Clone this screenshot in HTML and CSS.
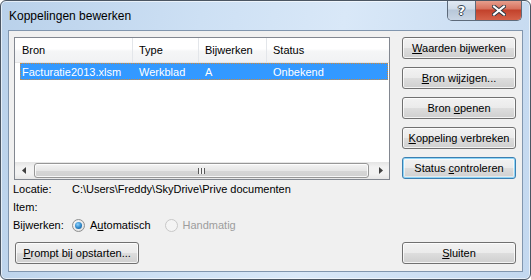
FILE: index.html
```html
<!DOCTYPE html>
<html lang="nl">
<head>
    <meta charset="UTF-8">
    <title>Koppelingen bewerken</title>
    <link rel="stylesheet" href="styles.css">
</head>
<body>
    <div class="window">
        <div class="titlebar">
            <span class="title">Koppelingen bewerken</span>
            <div class="caption-buttons">
                <span class="cap cap-help">?</span>
                <span class="cap cap-close">
                    <svg width="14" height="11" viewBox="0 0 14 11">
                        <path d="M2 1.5 L12 9.5 M12 1.5 L2 9.5" stroke="#2f3a44" stroke-width="4" stroke-linecap="square"/>
                        <path d="M2 1.5 L12 9.5 M12 1.5 L2 9.5" stroke="#fff" stroke-width="2" stroke-linecap="square"/>
                    </svg>
                </span>
            </div>
        </div>

        <div class="client">
            <div class="top">
                <div class="listview">
                    <div class="lv-header">
                        <span class="col c1">Bron</span>
                        <span class="col c2">Type</span>
                        <span class="col c3">Bijwerken</span>
                        <span class="col c4">Status</span>
                    </div>
                    <div class="lv-row selected">
                        <span class="cell c1">Facturatie2013.xlsm</span>
                        <span class="cell c2">Werkblad</span>
                        <span class="cell c3">A</span>
                        <span class="cell c4">Onbekend</span>
                    </div>
                    <div class="lv-body"></div>
                    <div class="hscroll">
                        <span class="sb-btn">
                            <svg width="4" height="7" viewBox="0 0 4 7"><path d="M4 0 L0 3.5 L4 7 Z" fill="#404040"/></svg>
                        </span>
                        <span class="sb-thumb">
                            <span class="grip"></span>
                        </span>
                        <span class="sb-btn">
                            <svg width="4" height="7" viewBox="0 0 4 7"><path d="M0 0 L4 3.5 L0 7 Z" fill="#404040"/></svg>
                        </span>
                    </div>
                </div>

                <div class="side-buttons">
                    <button class="btn"><u>W</u>aarden bijwerken</button>
                    <button class="btn"><u>B</u>ron wijzigen...</button>
                    <button class="btn">Bron <u>o</u>penen</button>
                    <button class="btn"><u>K</u>oppeling verbreken</button>
                    <button class="btn btn-default">Status <u>c</u>ontroleren</button>
                </div>
            </div>

            <div class="info">
                <div class="info-row">
                    <span class="label">Locatie:</span>
                    <span>C:\Users\Freddy\SkyDrive\Prive documenten</span>
                </div>
                <div class="info-row">
                    <span class="label">Item:</span>
                </div>
                <div class="info-row">
                    <span class="label">Bijwerken:</span>
                    <span class="radio checked"></span>
                    <span class="radio-text">A<u>u</u>tomatisch</span>
                    <span class="radio disabled"></span>
                    <span class="radio-text disabled">Handmatig</span>
                </div>
            </div>

            <div class="bottom">
                <button class="btn btn-prompt"><u>P</u>rompt bij opstarten...</button>
                <button class="btn btn-close"><u>S</u>luiten</button>
            </div>
        </div>
    </div>
</body>
</html>
```

FILE: styles.css
```css
body {
    margin: 0;
    font-family: "Liberation Sans", Arial, sans-serif;
    font-size: 11px;
    color: #000;
    background: #fff;
}
.window {
    width: 531px;
    height: 280px;
    box-sizing: border-box;
    border: 1px solid #4b5663;
    border-radius: 6px;
    background: linear-gradient(100deg, #b9d1ea 0%, #cde0f4 35%, #d9e8f8 60%, #c3d8ef 100%);
    box-shadow: inset 0 0 0 1px rgba(255, 255, 255, 0.6);
    display: flex;
    flex-direction: column;
    overflow: hidden;
}
.titlebar {
    height: 29px;
    flex: none;
    display: flex;
    justify-content: space-between;
    align-items: flex-start;
}
.title {
    font-size: 12px;
    margin: 8px 0 0 8px;
    color: #000;
}
.caption-buttons {
    display: flex;
    margin-right: 8px;
    margin-top: -1px;
    border: 1px solid #5d6a7a;
    border-top: none;
    border-radius: 0 0 5px 5px;
    overflow: hidden;
    height: 20px;
}
.cap {
    display: flex;
    align-items: center;
    justify-content: center;
    height: 20px;
}
.cap-help {
    width: 27px;
    border-right: 1px solid #5d6a7a;
    background: linear-gradient(#e3ebf4 0%, #cfdbe8 45%, #b7c7d9 50%, #c9d6e5 100%);
    font-family: "DejaVu Sans", sans-serif;
    font-weight: bold;
    font-size: 13px;
    color: #fff;
    text-shadow: 1px 0 #3a4654, -1px 0 #3a4654, 0 1px #3a4654, 0 -1px #3a4654;
}
.cap-close {
    width: 45px;
    background: linear-gradient(#e8a493 0%, #d7705c 45%, #c2412b 50%, #d5624a 100%);
}
.client {
    flex: 1;
    margin: 0 7px 7px 7px;
    border: 1px solid #8196ae;
    background: #f0f0f0;
    padding: 6px 6px 7px 5px;
    display: flex;
    flex-direction: column;
}
.top {
    display: flex;
    gap: 12px;
}
.listview {
    width: 376px;
    height: 143px;
    box-sizing: border-box;
    border: 1px solid #828790;
    background: #fff;
    display: flex;
    flex-direction: column;
}
.lv-header {
    height: 24px;
    display: flex;
    border-bottom: 1px solid #e5e5e5;
    background: linear-gradient(#ffffff 0%, #ffffff 45%, #f5f6f7 55%, #f1f2f4 100%);
    flex: none;
}
.col {
    display: flex;
    align-items: center;
    padding-left: 6px;
    box-sizing: border-box;
    border-right: 1px solid #e3e6ea;
}
.c1 { width: 118px; padding-left: 7px; }
.c2 { width: 66px; }
.c3 { width: 68px; }
.c4 { flex: 1; }
.lv-header .c4 { border-right: none; }
.lv-row {
    height: 17px;
    margin: 0 1px 0 5px;
    display: flex;
    box-sizing: border-box;
}
.lv-row.selected {
    background: #3399ff;
    color: #fff;
    border: 1px dotted #d0893a;
}
.cell {
    display: flex;
    align-items: center;
    padding-left: 6px;
    box-sizing: border-box;
}
.lv-row .c1 { width: 112px; padding-left: 1px; }
.lv-body {
    flex: 1;
}
.hscroll {
    height: 17px;
    flex: none;
    display: flex;
    background: linear-gradient(#e4e4e4, #f2f2f2 30%, #f2f2f2 70%, #e6e6e6);
}
.sb-btn {
    width: 17px;
    display: flex;
    align-items: center;
    justify-content: center;
}
.sb-thumb {
    flex: 1;
    margin: 1px 3px 1px 2px;
    border: 1px solid #979797;
    border-radius: 3px;
    background: linear-gradient(#f4f4f4 0%, #e6e6e6 50%, #d6d6d6 51%, #d0d0d0 100%);
    box-shadow: inset 0 0 0 1px rgba(255, 255, 255, 0.8);
    display: flex;
    align-items: center;
    justify-content: center;
}
.grip {
    width: 7px;
    height: 6px;
    background: repeating-linear-gradient(90deg, #5a5a5a 0 1px, #f4f4f4 1px 3px);
}
.side-buttons {
    width: 114px;
    display: flex;
    flex-direction: column;
    gap: 8px;
}
.btn {
    height: 22px;
    box-sizing: border-box;
    border: 1px solid #707070;
    border-radius: 3px;
    background: linear-gradient(#f2f2f2 0%, #ebebeb 48%, #dddddd 52%, #cfcfcf 100%);
    box-shadow: inset 0 0 0 1px rgba(255, 255, 255, 0.75);
    font-family: "Liberation Sans", Arial, sans-serif;
    font-size: 11px;
    color: #000;
    padding: 0;
}
.btn-default {
    border-color: #3c7fb1;
    box-shadow: inset 0 0 0 1px #8fd5f7, inset 0 0 0 2px rgba(255, 255, 255, 0.5);
}
.info {
    margin-left: -1px;
}
.info-row {
    height: 18px;
    display: flex;
    align-items: center;
}
.label {
    width: 59px;
    flex: none;
}
.radio {
    width: 13px;
    height: 13px;
    box-sizing: border-box;
    border-radius: 50%;
    border: 1px solid #8e8f8f;
    background: radial-gradient(circle at 40% 40%, #ffffff 0%, #e8e8e8 60%, #d4d4d4 100%);
    margin-right: 5px;
    display: flex;
    align-items: center;
    justify-content: center;
}
.radio.checked::after {
    content: "";
    width: 7px;
    height: 7px;
    border-radius: 50%;
    background: radial-gradient(circle at 40% 35%, #8fd3ff 0%, #2d85c6 55%, #134f86 100%);
}
.radio.disabled {
    border-color: #c8c8c8;
    background: #f4f4f4;
}
.radio-text {
    margin-right: 14px;
}
.radio-text.disabled {
    color: #9d9d9d;
}
.bottom {
    margin-top: auto;
    display: flex;
    justify-content: space-between;
    padding-left: 1px;
}
.btn-prompt {
    width: 124px;
}
.btn-close {
    width: 114px;
}
```
